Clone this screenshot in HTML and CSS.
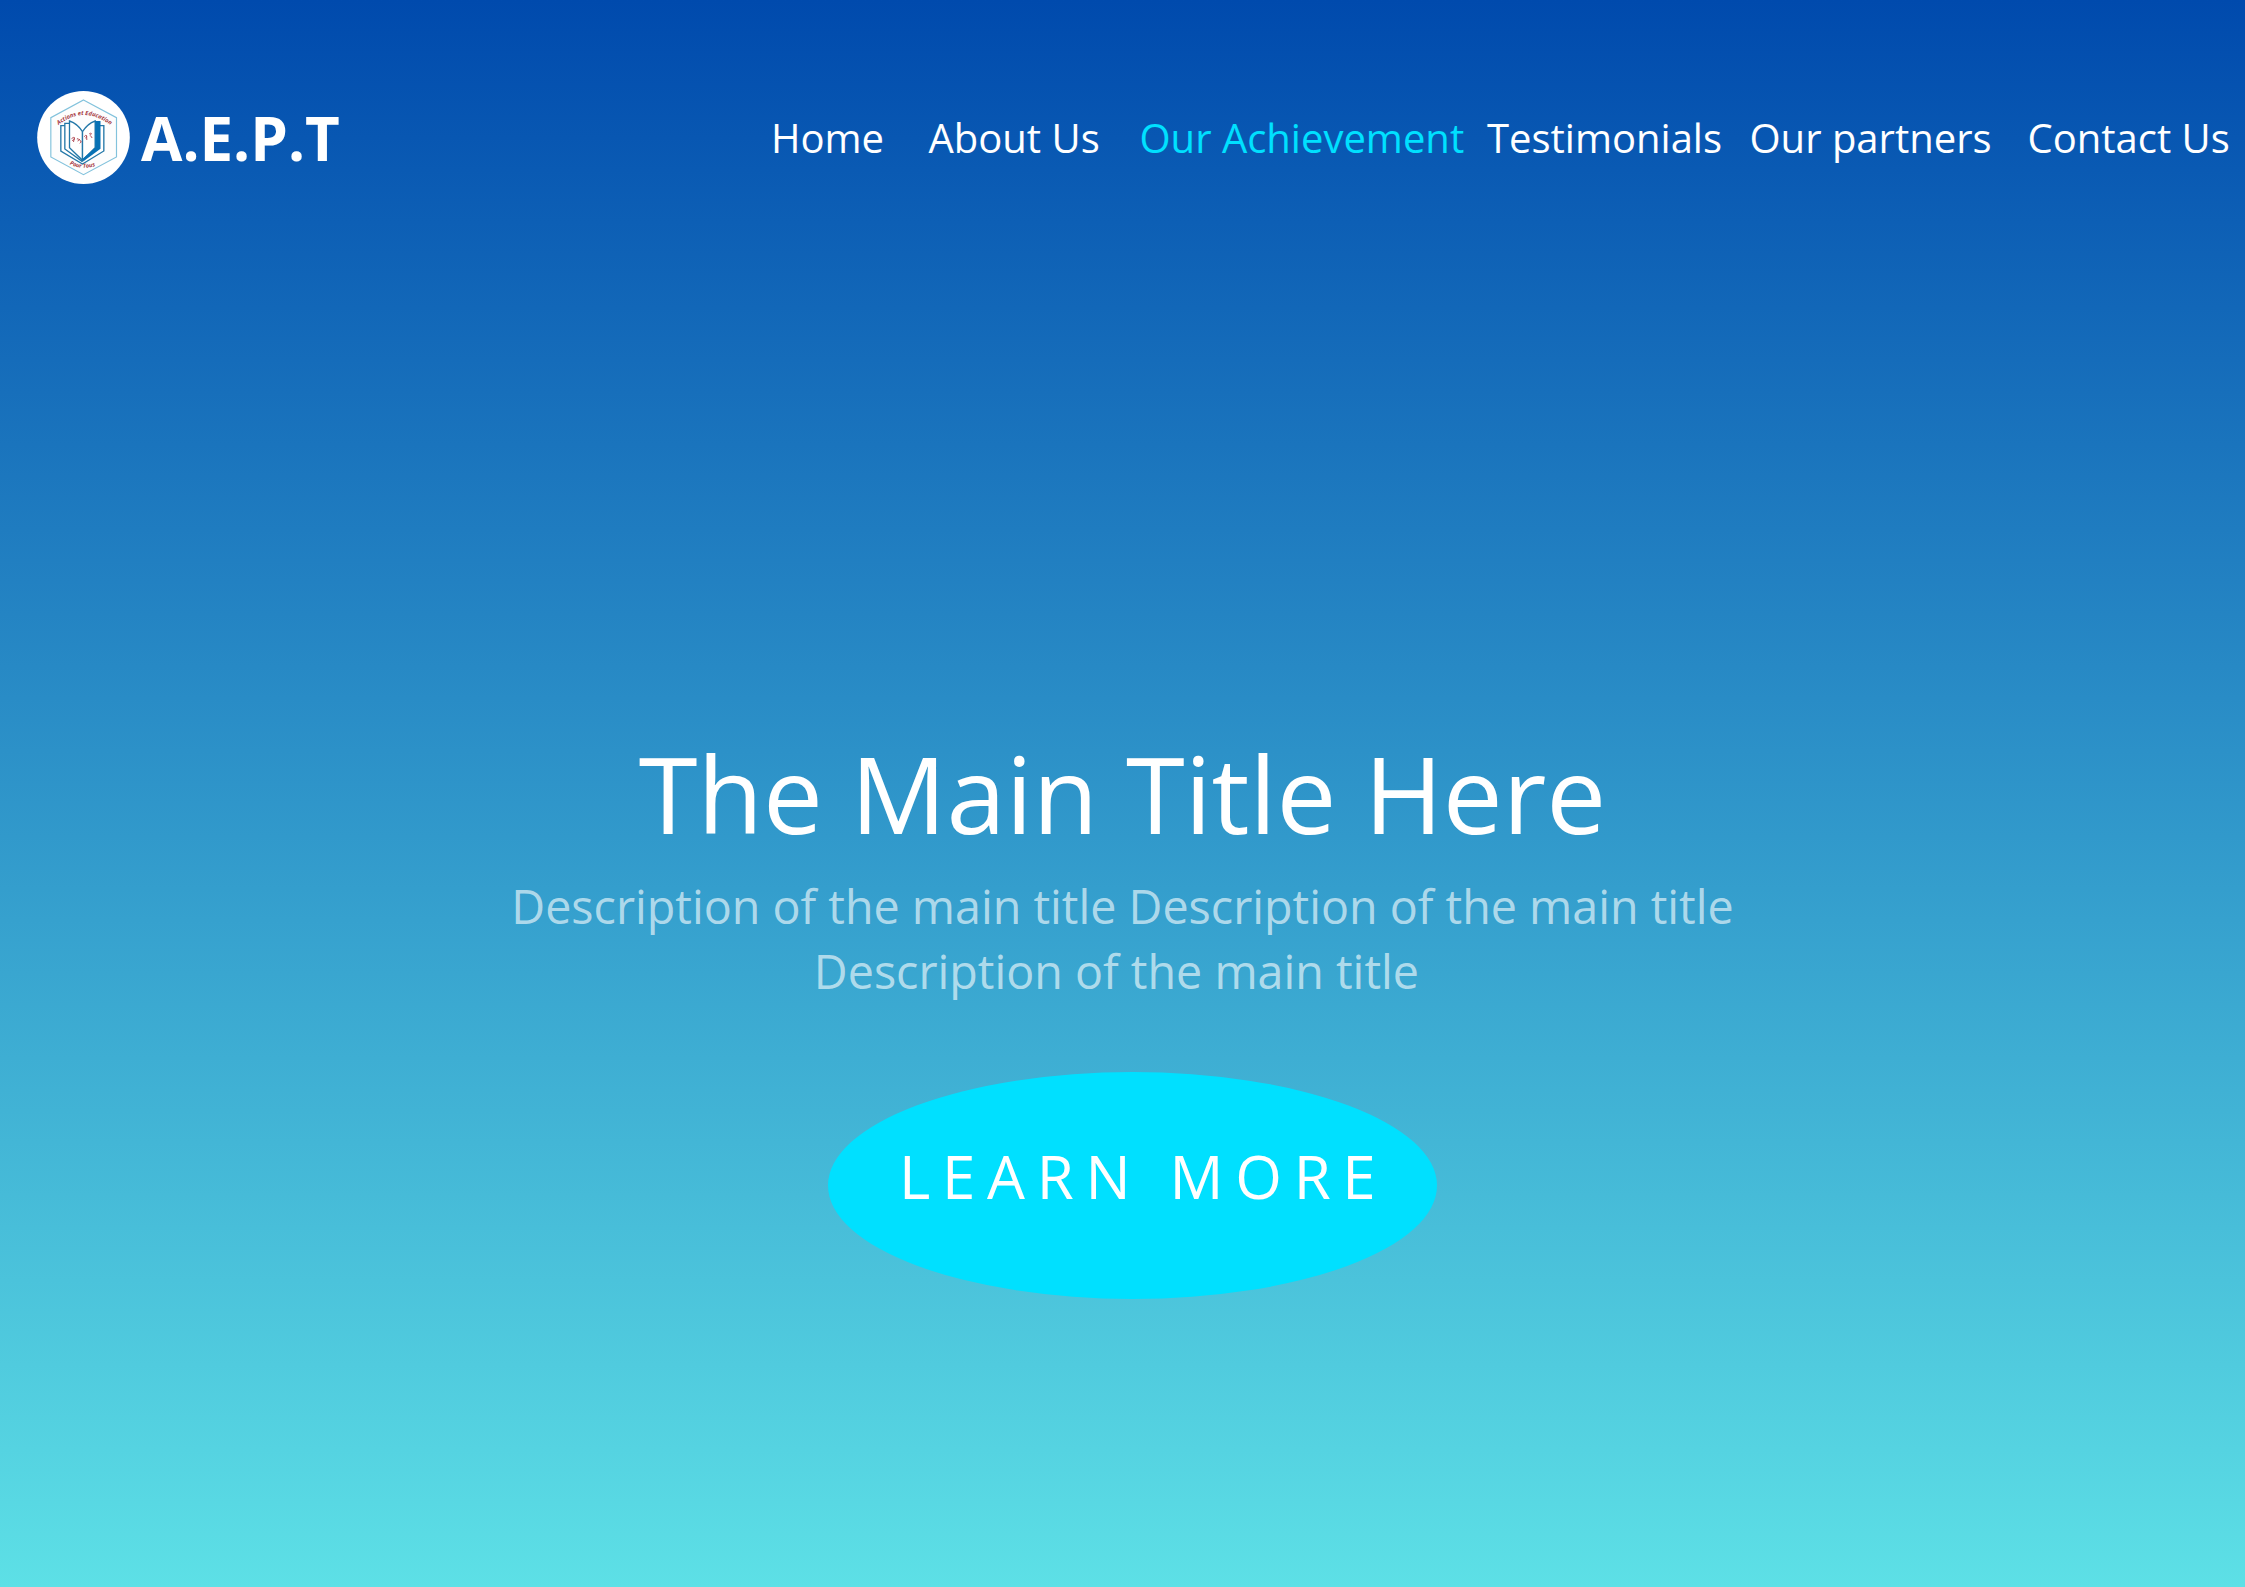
FILE: index.html
```html
<!DOCTYPE html>
<html lang="en">
<head>
<meta charset="utf-8">
<title>A.E.P.T</title>
<link rel="stylesheet" href="styles.css">
</head>
<body>
<header class="header">
  <a class="brand">
    <svg class="logo" viewBox="21 18 278 279" role="img" aria-label="Actions et Education Pour Tous">
      <defs>
        <path id="arc-top" d="M85 120 Q160 60 240 120"/>
        <path id="arc-bottom" d="M118 238 Q160 260 212 236"/>
      </defs>
      <ellipse cx="160" cy="157.500" rx="139" ry="139.500" fill="#fff"/>
      <path d="M160 45 L259 98 V216 L160 269 L62 216 V98 Z" fill="#fdfdfd" stroke="#82c2dc" stroke-width="3.500"/>
      <g fill="#fff" stroke="#2478a8" stroke-width="4" stroke-linejoin="miter">
        <path d="M117 122 H92 V198 L157 237 L221 198 V122 H208"/>
        <path d="M118 115 H104 V192 L157 230"/>
        <path d="M118 108 V188 L157 226 V140 Q142 116 118 108 Z"/>
        <path d="M157 140 Q172 116 195 108 V188 L157 226 Z"/>
      </g>
      <path d="M195 108 H211 V191 L160 229 L157 222 L195 188 Z" fill="#0872b5"/>
      <g fill="none" stroke="#b4505a" stroke-width="3">
        <path d="M124 161 l6 -4 4 5 -8 5 M133 157 l-3 14 M140 162 q5 -3 6 2 l-3 5 M147 162 l6 9 M149 175 l5 -5"/>
        <path d="M162 155 q5 -7 8 -1 l-4 6 M169 151 l1 14 M177 147 q5 -6 7 0 l-5 4 M181 152 l5 7"/>
      </g>
      <text class="logo-text" font-size="17.500"><textPath href="#arc-top">Actions et Education</textPath></text>
      <text class="logo-text" font-size="17"><textPath href="#arc-bottom">Pour Tous</textPath></text>
    </svg>
    <span class="brand-name">A.E.P.T</span>
  </a>
  <nav class="nav">
    <a>Home</a>
    <a>About Us</a>
    <a class="active">Our Achievement</a>
    <a>Testimonials</a>
    <a>Our partners</a>
    <a>Contact Us</a>
  </nav>
</header>
<main class="hero">
  <h1 class="title">The Main Title Here</h1>
  <p class="description">Description of the main title Description of the main title<br>Description of the main title&nbsp;</p>
  <a class="button">LEARN MORE</a>
</main>
</body>
</html>
```
FILE: styles.css
```css
* { box-sizing: border-box; }

body {
  margin: 0;
  min-height: 1587px;
  overflow: hidden;
  background: linear-gradient(#004aad, #5de0e6);
  color: #fff;
  font-family: "Open Sans", "Noto Sans", sans-serif;
}

.header {
  display: flex;
  align-items: center;
  height: 275px;
  padding-left: 37px;
}

.brand {
  display: flex;
  align-items: center;
  width: 734px;
  gap: 11px;
}

.logo {
  width: 93px;
  height: 93px;
}

.logo-text {
  fill: #a53640;
  font-family: "Open Sans", sans-serif;
  font-style: italic;
  font-weight: 700;
}

.brand-name {
  padding-top: 1px;
  font-size: 60px;
  font-weight: 700;
  line-height: 80px;
}

.nav {
  display: grid;
  grid-template-columns: 157.5px 211px 347.5px 262.5px 278px 209px;
  font-size: 40px;
  line-height: 56px;
  white-space: nowrap;
}

.active { color: #00e0ff; }

.hero {
  display: flex;
  flex-direction: column;
  align-items: center;
  padding-top: 443px;
}

.title {
  margin: 0;
  font-size: 106.7px;
  font-weight: 400;
  line-height: 150px;
}

.description {
  margin: 6px 0 0;
  color: rgba(255, 255, 255, 0.62);
  font-size: 46.65px;
  line-height: 65.3px;
  text-align: center;
}

.button {
  width: 609px;
  height: 227px;
  margin: 67px 0 0 20px;
  padding-left: 71px;
  border-radius: 50%;
  background: #00e0ff;
  font-size: 60px;
  letter-spacing: 11.7px;
  line-height: 208px;
  white-space: nowrap;
}
```
